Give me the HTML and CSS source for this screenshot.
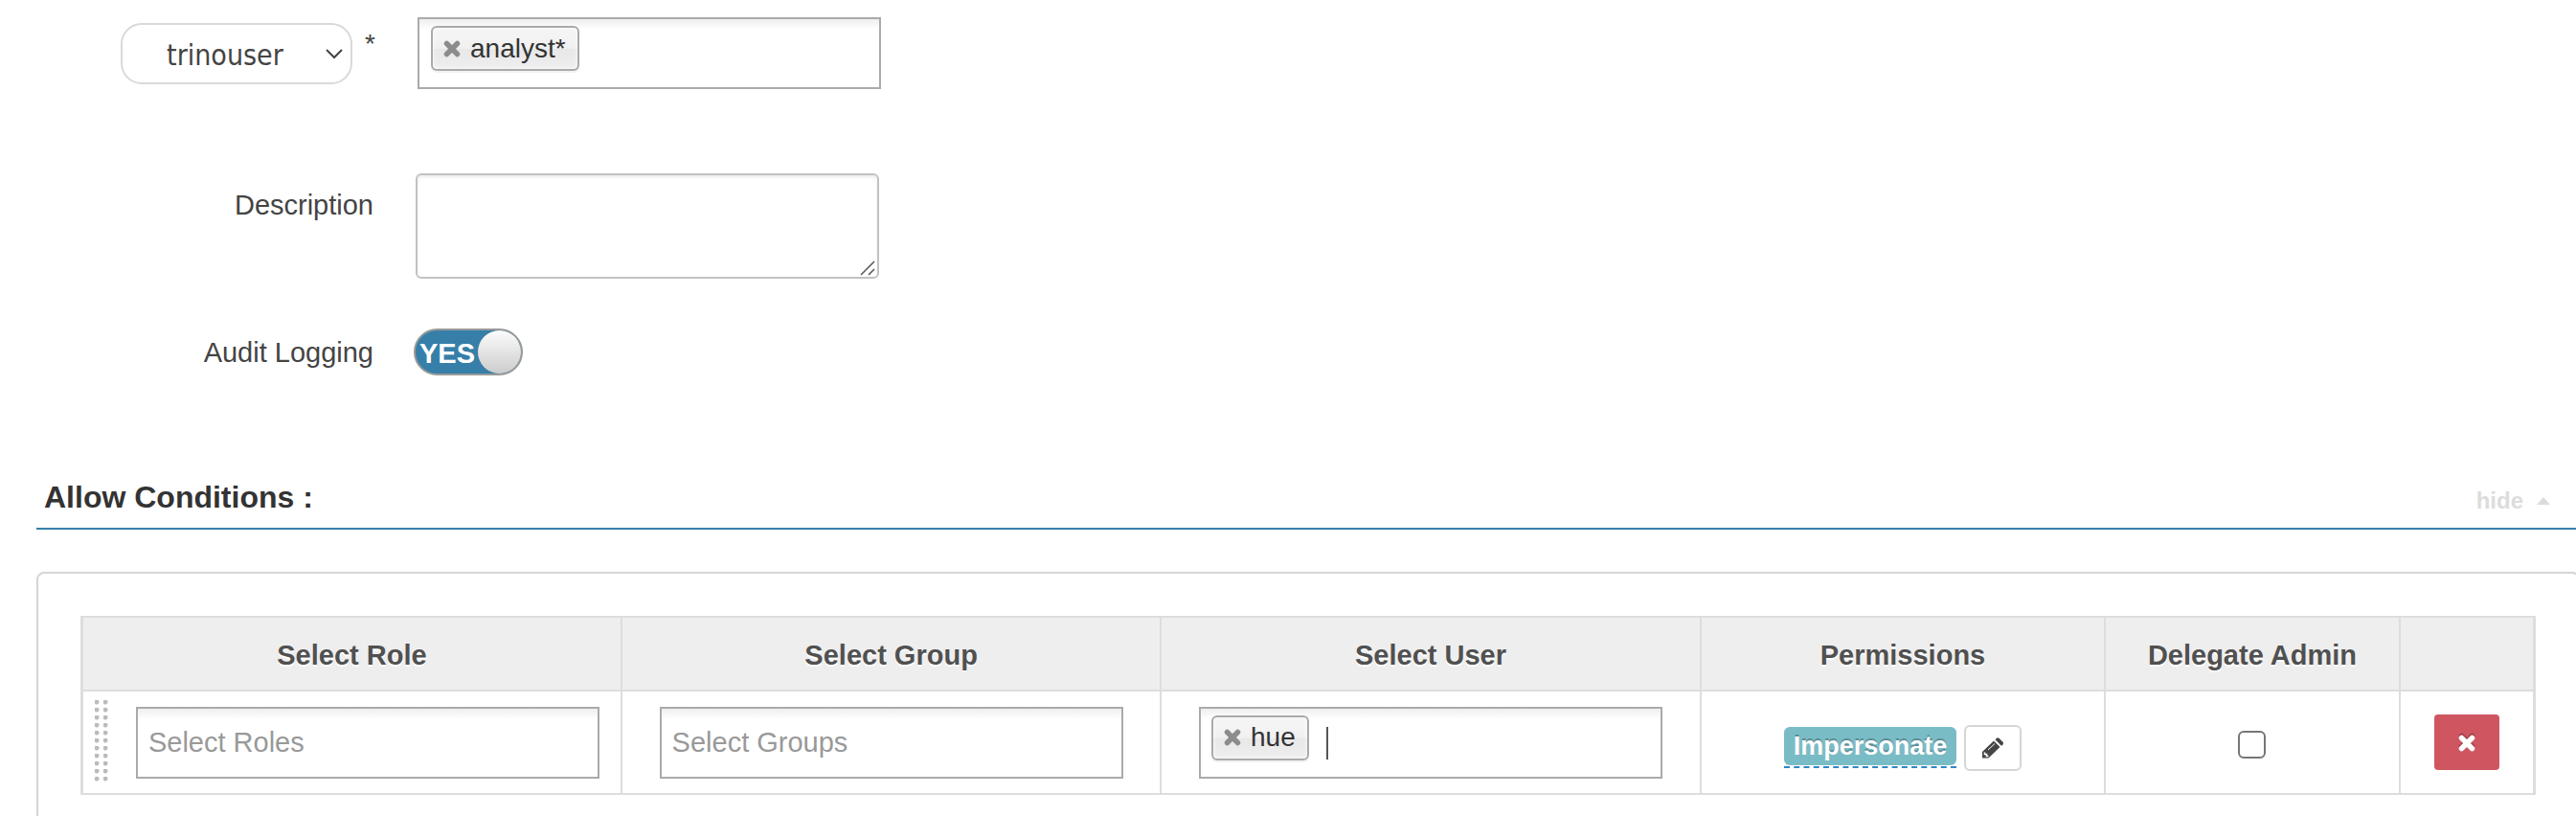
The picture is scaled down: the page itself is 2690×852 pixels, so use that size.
FILE: index.html
```html
<!DOCTYPE html>
<html lang="en">
<head>
<meta charset="utf-8">
<title>Policy Details</title>
<link rel="stylesheet" href="styles.css">
</head>
<body>
<form class="policy">
  <div class="row row-resource">
    <div class="row-label">
      <div class="resource">
        <select class="resource-select" aria-label="Resource type"><option>trinouser</option></select>
        <svg class="chevron" viewBox="0 0 18 11" aria-hidden="true"><path d="M1 1l8 8 8-8" fill="none" stroke="#444" stroke-width="2"/></svg>
      </div>
      <span class="required">*</span>
    </div>
    <div class="tags">
      <span class="tag"><button type="button" class="tag-remove" aria-label="Remove analyst*"><svg viewBox="0 0 18 18" aria-hidden="true"><path d="M3.500 3.500l11 11M14.500 3.500l-11 11" stroke="#8c8c8c" stroke-width="5.500" stroke-linecap="round"/></svg></button>analyst*</span>
      <input class="tags-input" type="text" aria-label="Trino user">
    </div>
  </div>
  <div class="row row-description">
    <label class="row-label" for="description">Description</label>
    <div class="area">
      <textarea id="description" class="area-input"></textarea>
      <svg class="area-grip" viewBox="0 0 16 16" aria-hidden="true"><path d="M1 15L15 1M9 15l6-6" stroke="#555" stroke-width="1.500"/></svg>
    </div>
  </div>
  <div class="row row-audit">
    <label class="row-label" for="audit">Audit Logging</label>
    <span class="toggle"><input id="audit" class="toggle-input" type="checkbox" checked><span class="toggle-text">YES</span><span class="toggle-knob"></span></span>
  </div>

  <section class="conditions">
    <header class="conditions-head">
      <h2 class="conditions-title">Allow Conditions :</h2>
      <a class="conditions-hide" href="#allow">hide <svg class="caret" viewBox="0 0 14 8" aria-hidden="true"><path d="M0 8L7 0l7 8z" fill="#dcdcdc"/></svg></a>
    </header>
    <div class="panel" id="allow">
      <table class="grid">
        <colgroup><col class="col-select"><col class="col-select"><col class="col-select"><col class="col-perm"><col class="col-admin"><col></colgroup>
        <thead>
          <tr><th>Select Role</th><th>Select Group</th><th>Select User</th><th>Permissions</th><th>Delegate Admin</th><th></th></tr>
        </thead>
        <tbody>
          <tr>
            <td>
              <div class="cell-role">
                <span class="drag"></span>
                <div class="tags"><input class="tags-input" type="text" placeholder="Select Roles" aria-label="Select Roles"></div>
              </div>
            </td>
            <td><div class="tags"><input class="tags-input" type="text" placeholder="Select Groups" aria-label="Select Groups"></div></td>
            <td>
              <div class="tags">
                <span class="tag"><button type="button" class="tag-remove" aria-label="Remove hue"><svg viewBox="0 0 18 18" aria-hidden="true"><path d="M3.500 3.500l11 11M14.500 3.500l-11 11" stroke="#8c8c8c" stroke-width="5.500" stroke-linecap="round"/></svg></button>hue</span>
                <span class="text-cursor"></span>
                <input class="tags-input" type="text" aria-label="Select User">
              </div>
            </td>
            <td>
              <div class="perms">
                <span class="perm"><span class="perm-label">Impersonate</span></span>
                <button type="button" class="edit" aria-label="Edit permissions"><svg viewBox="0 0 22 22" aria-hidden="true"><path d="M0 21.500V15L12 3.500l6.500 6.500L6.500 21.500z" fill="#444"/><path d="M13.500 2.200L15 .8q1.200-1 2.500 0l4 4q1 1.200 0 2.400l-1.500 1.500z" fill="#444"/><path d="M2.500 15.500v2h2v2h2" fill="none" stroke="#fff" stroke-width="1.600"/><path d="M6 13l7-6.500" stroke="#fff" stroke-width="1"/></svg></button>
              </div>
            </td>
            <td class="cell-admin"><input class="admin" type="checkbox" aria-label="Delegate Admin"></td>
            <td><button type="button" class="delete" aria-label="Delete row"><svg viewBox="0 0 18 20" aria-hidden="true"><path d="M3.500 3.500l11 11M14.500 3.500l-11 11" stroke="#9c3f48" stroke-width="5.500" stroke-linecap="round"/><path d="M3.500 5.500l11 11M14.500 5.500l-11 11" stroke="#fff" stroke-width="5.500" stroke-linecap="round"/></svg></button></td>
          </tr>
        </tbody>
      </table>
    </div>
  </section>
</form>
</body>
</html>
```
FILE: styles.css
```css
* { box-sizing: border-box; }
body {
  margin: 0;
  background: #fff;
  color: #444;
  font-family: "Liberation Sans", Arial, sans-serif;
  font-size: 28px;
  line-height: 40px;
  overflow-x: hidden;
}
input, select, textarea, button { font: inherit; color: inherit; }
svg { display: block; }

.policy { padding-top: 18px; }
.row { display: flex; align-items: flex-start; gap: 44px; }
.row-label { width: 390px; font-size: 29px; text-align: right; flex: none; }
.row-resource { margin-bottom: 88px; padding-left: 2px; }
.row-resource .row-label { display: flex; justify-content: flex-end; gap: 13px; padding-top: 6px; }
.row-description { margin-bottom: 52px; }
.row-description .row-label { padding-top: 13px; }
.row-audit .row-label { padding-top: 5px; }

.resource { position: relative; width: 242px; }
.resource-select {
  appearance: none;
  display: block;
  width: 100%;
  height: 64px;
  padding: 3px 46px 0;
  border: 2px solid #d9d9d9;
  border-radius: 22px;
  background: #fff;
  font-family: "DejaVu Sans Condensed", "Noto Sans", sans-serif;
  font-size: 30px;
}
.chevron { position: absolute; right: 10px; top: 27px; width: 18px; height: 11px; pointer-events: none; }
.required { padding-top: 2px; font-size: 28px; }

.tags {
  display: flex;
  align-items: flex-start;
  width: 484px;
  height: 75px;
  padding: 7px 12px;
  border: 2px solid #aaa;
  background: linear-gradient(#eee, #fff 15%);
}
.tags-input {
  flex: 1;
  min-width: 0;
  height: 57px;
  padding: 0;
  border: 0;
  outline: 0;
  background: none;
  font-size: 29px;
}
.tags-input::placeholder { color: #999; opacity: 1; }
.tag {
  display: flex;
  align-items: center;
  gap: 10px;
  height: 47px;
  padding: 0 12px 0 11px;
  border: 2px solid #aaa;
  border-radius: 6px;
  background: linear-gradient(#f4f4f4 20%, #f0f0f0 50%, #e8e8e8 52%, #eee);
  box-shadow: 0 0 4px #fff inset, 0 2px 0 rgba(0, 0, 0, .05);
  color: #333;
}
.tag-remove { padding: 0; border: 0; background: none; }
.tag-remove svg { width: 18px; height: 18px; }
.text-cursor { width: 2px; height: 34px; margin: 12px 0 0 18px; background: #555; }

.area { position: relative; width: 484px; }
.area-input {
  display: block;
  width: 100%;
  height: 110px;
  padding: 8px 12px;
  border: 2px solid #c2c2c2;
  border-radius: 6px;
  box-shadow: inset 0 2px 3px rgba(0, 0, 0, .08);
  resize: none;
}
.area-grip { position: absolute; right: 4px; bottom: 3px; width: 16px; height: 16px; }

.toggle {
  position: relative;
  display: flex;
  align-items: center;
  justify-content: space-between;
  width: 114px;
  height: 49px;
  margin-left: -2px;
  border: 2px solid #999;
  border-radius: 25px;
  background: #367fa9;
}
.toggle-input { position: absolute; inset: 0; width: 100%; height: 100%; margin: 0; opacity: 0; }
.toggle-text { padding: 2px 0 0 4px; color: #fff; font-size: 29px; font-weight: bold; }
.toggle-knob { width: 45px; height: 45px; border-radius: 50%; background: linear-gradient(#fcfcfc, #ccc); }

.conditions { margin: 92px 0 0 38px; }
.conditions-head {
  display: flex;
  align-items: center;
  justify-content: space-between;
  padding: 14px 27px 12px 8px;
  border-bottom: 2px solid #367fa9;
}
.conditions-title { margin: 0; color: #333; font-size: 32px; line-height: 40px; }
.conditions-hide {
  display: flex;
  align-items: center;
  gap: 14px;
  padding-top: 9px;
  color: #dcdcdc;
  font-size: 24px;
  line-height: 32px;
  font-weight: bold;
  text-decoration: none;
}
.caret { width: 14px; height: 8px; }

.panel {
  margin: 44px -4px 0 0;
  padding: 44px;
  border: 2px solid #d5d5d5;
  border-radius: 8px;
}
.grid {
  width: 100%;
  table-layout: fixed;
  border-collapse: collapse;
  border: 3px solid #ddd;
  border-top-width: 2px;
  border-bottom-width: 2px;
}
.col-select { width: 22%; }
.col-perm { width: 16.5%; }
.col-admin { width: 12%; }
.grid th {
  height: 77px;
  padding: 2px 0 0;
  border: 2px solid #ddd;
  background: #eee;
  color: #505050;
  font-size: 29px;
  text-shadow: 0 2px 0 #fff;
}
.grid td { height: 108px; padding: 0; border: 2px solid #ddd; text-align: center; }
.grid .tags { margin: 0 auto; padding-left: 11px; text-align: left; }
.cell-role { display: flex; align-items: center; padding: 0 22px 0 12px; }
.drag {
  width: 17px;
  height: 88px;
  background: radial-gradient(circle at 2px 2px, #bbb 2px, transparent 3px) 0 0 / 9px 8px;
}
.grid .cell-role .tags { margin: 0 0 0 auto; }

.perms { display: flex; justify-content: center; gap: 8px; padding-top: 12px; }
.perm { padding: 2px 0 1px; height: 45px; border-bottom: 2px dashed #2f86c8; }
.perm-label {
  display: block;
  padding: 0 10px;
  border-radius: 6px;
  background: #7abcc6;
  color: #fff;
  font-size: 27px;
  line-height: 40px;
  font-weight: bold;
  text-shadow: 0 -2px 0 rgba(0, 0, 0, .25);
}
.edit {
  display: flex;
  align-items: center;
  justify-content: center;
  width: 60px;
  height: 48px;
  padding: 0;
  border: 2px solid #d5d5d5;
  border-radius: 6px;
  background: #fff;
}
.edit svg { width: 22px; height: 22px; }
.grid .cell-admin { padding-top: 4px; }
.admin {
  appearance: none;
  display: block;
  width: 29px;
  height: 29px;
  margin: 0 auto;
  border: 2px solid #767676;
  border-radius: 6px;
  background: #fff;
}
.delete {
  display: flex;
  align-items: center;
  justify-content: center;
  width: 68px;
  height: 58px;
  margin: 0 auto;
  padding: 0;
  border: 0;
  border-radius: 4px;
  background: #cf5660;
}
.delete svg { width: 18px; height: 20px; }
```
